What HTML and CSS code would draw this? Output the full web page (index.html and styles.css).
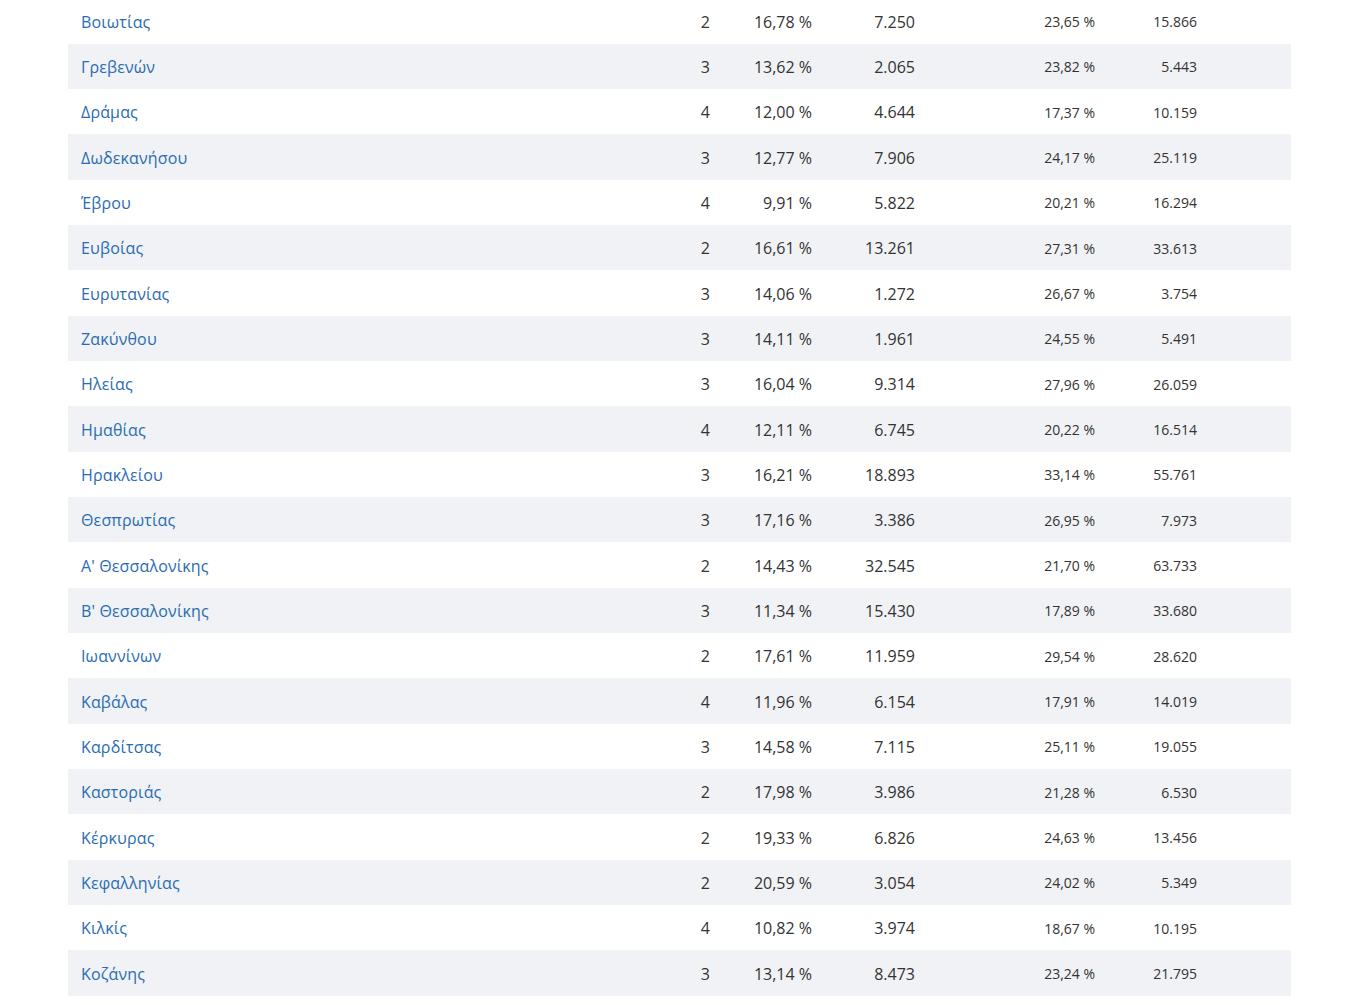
FILE: index.html
```html
<!DOCTYPE html>
<html lang="el">
<head>
<meta charset="utf-8">
<title>Περιφέρειες</title>
<link rel="stylesheet" href="styles.css">
</head>
<body>
<div class="table">
  <div class="row"><a class="name" href="#">Βοιωτίας</a><span class="num">2</span><span class="num">16,78 %</span><span class="num">7.250</span><span class="num sm">23,65 %</span><span class="num sm">15.866</span></div>
  <div class="row"><a class="name" href="#">Γρεβενών</a><span class="num">3</span><span class="num">13,62 %</span><span class="num">2.065</span><span class="num sm">23,82 %</span><span class="num sm">5.443</span></div>
  <div class="row"><a class="name" href="#">Δράμας</a><span class="num">4</span><span class="num">12,00 %</span><span class="num">4.644</span><span class="num sm">17,37 %</span><span class="num sm">10.159</span></div>
  <div class="row"><a class="name" href="#">Δωδεκανήσου</a><span class="num">3</span><span class="num">12,77 %</span><span class="num">7.906</span><span class="num sm">24,17 %</span><span class="num sm">25.119</span></div>
  <div class="row"><a class="name" href="#">Έβρου</a><span class="num">4</span><span class="num">9,91 %</span><span class="num">5.822</span><span class="num sm">20,21 %</span><span class="num sm">16.294</span></div>
  <div class="row"><a class="name" href="#">Ευβοίας</a><span class="num">2</span><span class="num">16,61 %</span><span class="num">13.261</span><span class="num sm">27,31 %</span><span class="num sm">33.613</span></div>
  <div class="row"><a class="name" href="#">Ευρυτανίας</a><span class="num">3</span><span class="num">14,06 %</span><span class="num">1.272</span><span class="num sm">26,67 %</span><span class="num sm">3.754</span></div>
  <div class="row"><a class="name" href="#">Ζακύνθου</a><span class="num">3</span><span class="num">14,11 %</span><span class="num">1.961</span><span class="num sm">24,55 %</span><span class="num sm">5.491</span></div>
  <div class="row"><a class="name" href="#">Ηλείας</a><span class="num">3</span><span class="num">16,04 %</span><span class="num">9.314</span><span class="num sm">27,96 %</span><span class="num sm">26.059</span></div>
  <div class="row"><a class="name" href="#">Ημαθίας</a><span class="num">4</span><span class="num">12,11 %</span><span class="num">6.745</span><span class="num sm">20,22 %</span><span class="num sm">16.514</span></div>
  <div class="row"><a class="name" href="#">Ηρακλείου</a><span class="num">3</span><span class="num">16,21 %</span><span class="num">18.893</span><span class="num sm">33,14 %</span><span class="num sm">55.761</span></div>
  <div class="row"><a class="name" href="#">Θεσπρωτίας</a><span class="num">3</span><span class="num">17,16 %</span><span class="num">3.386</span><span class="num sm">26,95 %</span><span class="num sm">7.973</span></div>
  <div class="row"><a class="name" href="#">Α' Θεσσαλονίκης</a><span class="num">2</span><span class="num">14,43 %</span><span class="num">32.545</span><span class="num sm">21,70 %</span><span class="num sm">63.733</span></div>
  <div class="row"><a class="name" href="#">Β' Θεσσαλονίκης</a><span class="num">3</span><span class="num">11,34 %</span><span class="num">15.430</span><span class="num sm">17,89 %</span><span class="num sm">33.680</span></div>
  <div class="row"><a class="name" href="#">Ιωαννίνων</a><span class="num">2</span><span class="num">17,61 %</span><span class="num">11.959</span><span class="num sm">29,54 %</span><span class="num sm">28.620</span></div>
  <div class="row"><a class="name" href="#">Καβάλας</a><span class="num">4</span><span class="num">11,96 %</span><span class="num">6.154</span><span class="num sm">17,91 %</span><span class="num sm">14.019</span></div>
  <div class="row"><a class="name" href="#">Καρδίτσας</a><span class="num">3</span><span class="num">14,58 %</span><span class="num">7.115</span><span class="num sm">25,11 %</span><span class="num sm">19.055</span></div>
  <div class="row"><a class="name" href="#">Καστοριάς</a><span class="num">2</span><span class="num">17,98 %</span><span class="num">3.986</span><span class="num sm">21,28 %</span><span class="num sm">6.530</span></div>
  <div class="row"><a class="name" href="#">Κέρκυρας</a><span class="num">2</span><span class="num">19,33 %</span><span class="num">6.826</span><span class="num sm">24,63 %</span><span class="num sm">13.456</span></div>
  <div class="row"><a class="name" href="#">Κεφαλληνίας</a><span class="num">2</span><span class="num">20,59 %</span><span class="num">3.054</span><span class="num sm">24,02 %</span><span class="num sm">5.349</span></div>
  <div class="row"><a class="name" href="#">Κιλκίς</a><span class="num">4</span><span class="num">10,82 %</span><span class="num">3.974</span><span class="num sm">18,67 %</span><span class="num sm">10.195</span></div>
  <div class="row"><a class="name" href="#">Κοζάνης</a><span class="num">3</span><span class="num">13,14 %</span><span class="num">8.473</span><span class="num sm">23,24 %</span><span class="num sm">21.795</span></div>
</div>
</body>
</html>
```
FILE: styles.css
```css
html, body {
  margin: 0;
  padding: 0;
  background: #ffffff;
}
body {
  font-family: "Open Sans", "Noto Sans", sans-serif;
  font-size: 16px;
  color: #333333;
  overflow: hidden;
}
.table {
  margin: -1.5px 0 0 68px;
  width: 1223px;
}
.row {
  box-sizing: border-box;
  display: grid;
  grid-template-columns: 609px 20px 102px 103px 180px 102px;
  padding: 1px 94px 0 13px;
  height: 45.333px;
  align-items: center;
}
.row:nth-child(even) {
  background: #f0f2f5;
}
.name {
  color: #2a6cb3;
  text-decoration: none;
  white-space: nowrap;
  letter-spacing: 0.15px;
}
.num {
  text-align: right;
  white-space: nowrap;
}
.sm {
  font-size: 14px;
}
```
